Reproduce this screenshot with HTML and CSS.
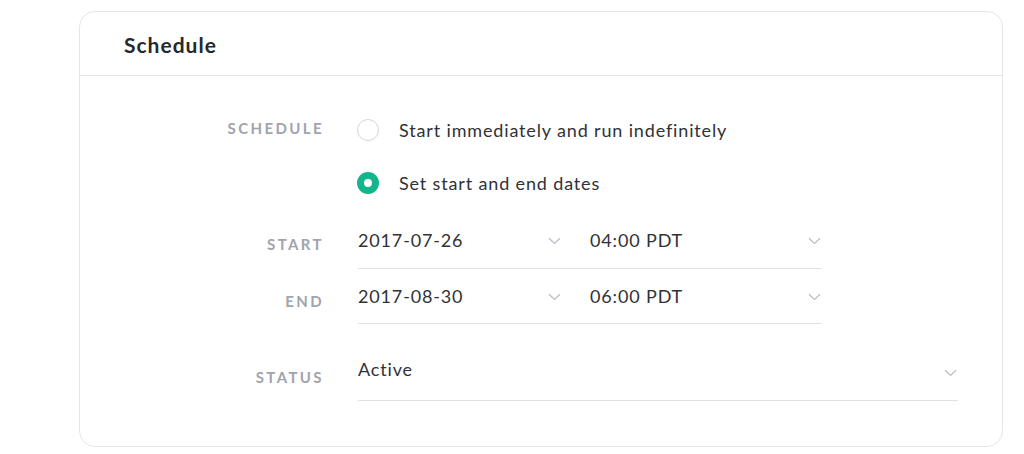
FILE: index.html
```html
<!DOCTYPE html>
<html>
<head>
<meta charset="utf-8">
<link rel="stylesheet" href="styles.css">
</head>
<body>
<div class="card">
  <div class="card-header"><h2 class="title">Schedule</h2></div>
  <div class="card-body">
    <div class="row row-schedule">
      <div class="label label-schedule">SCHEDULE</div>
      <div class="radios">
        <div class="radio-row"><span class="radio"></span><span class="radio-text">Start immediately and run indefinitely</span></div>
        <div class="radio-row"><span class="radio checked"></span><span class="radio-text">Set start and end dates</span></div>
      </div>
    </div>
    <div class="row row-start">
      <div class="label label-date">START</div>
      <div class="fields">
        <div class="field field-date"><span class="value">2017-07-26</span><svg class="chev" width="13" height="8" viewBox="0 0 13 8"><path d="M1 1.2 L6.5 6.5 L12 1.2" fill="none" stroke="#b8bcc6" stroke-width="1.2"/></svg></div>
        <div class="field field-time"><span class="value">04:00 PDT</span><svg class="chev" width="13" height="8" viewBox="0 0 13 8"><path d="M1 1.2 L6.5 6.5 L12 1.2" fill="none" stroke="#b8bcc6" stroke-width="1.2"/></svg></div>
      </div>
    </div>
    <div class="row row-end">
      <div class="label label-date">END</div>
      <div class="fields">
        <div class="field field-date"><span class="value">2017-08-30</span><svg class="chev" width="13" height="8" viewBox="0 0 13 8"><path d="M1 1.2 L6.5 6.5 L12 1.2" fill="none" stroke="#b8bcc6" stroke-width="1.2"/></svg></div>
        <div class="field field-time"><span class="value">06:00 PDT</span><svg class="chev" width="13" height="8" viewBox="0 0 13 8"><path d="M1 1.2 L6.5 6.5 L12 1.2" fill="none" stroke="#b8bcc6" stroke-width="1.2"/></svg></div>
      </div>
    </div>
    <div class="row row-status">
      <div class="label label-status">STATUS</div>
      <div class="field field-status"><span class="value">Active</span><svg class="chev" width="13" height="8" viewBox="0 0 13 8"><path d="M1 1.2 L6.5 6.5 L12 1.2" fill="none" stroke="#b8bcc6" stroke-width="1.2"/></svg></div>
    </div>
  </div>
</div>
</body>
</html>
```
FILE: styles.css
```css
* { box-sizing: border-box; }
html, body { margin: 0; padding: 0; background: #fff; }
body {
  font-family: "Lato", "Noto Sans", sans-serif;
  color: #2b2d31;
  padding: 11px 21px 0 79px;
}
.card {
  width: 924px;
  height: 436px;
  border: 1px solid #e4e5e8;
  border-radius: 16px;
  background: #fff;
}
.card-header {
  height: 64px;
  border-bottom: 1px solid #e4e5e8;
  padding-left: 44px;
  display: flex;
  align-items: center;
}
.title {
  margin: 0;
  font-size: 21px;
  font-weight: 700;
  letter-spacing: 1px;
  color: #26282c;
  padding-top: 2px;
}
.card-body {
  padding-top: 39px;
}
.row {
  display: grid;
  grid-template-columns: 242px 1fr;
  column-gap: 36px;
}
.label {
  text-align: right;
  font-size: 15px;
  font-weight: 700;
  letter-spacing: 2.4px;
  margin-right: -2px;
  color: #a0a4ad;
  line-height: 24px;
}
.label-schedule { padding-top: 1px; }
.label-date { padding-top: 20px; }
.label-status { padding-top: 25px; }
.radios { display: flex; flex-direction: column; gap: 23px; }
.radio-row {
  display: flex;
  align-items: center;
  height: 30px;
}
.radio {
  width: 22px;
  height: 22px;
  border-radius: 50%;
  border: 1.5px solid #d3d6dc;
  margin-right: 20px;
  margin-left: -1px;
  flex: none;
}
.radio.checked {
  border: 7px solid #13b58b;
  background: #fff;
}
.radio-text { font-size: 18px; letter-spacing: 0.85px; color: #303236; }
.row-start { margin-top: 14px; }
.fields { display: flex; }
.field {
  display: flex;
  align-items: center;
  justify-content: space-between;
  border-bottom: 1px solid #dfe1e6;
  line-height: 24px;
}
.value { font-size: 18px; letter-spacing: 0.85px; color: #303236; }
.row-start .field { padding: 16px 0 16px; }
.row-end .field { padding: 15px 0 15px; }
.field-date { width: 232px; padding-right: 29px !important; }
.field-time { width: 232px; padding-right: 1px !important; }
.row-status { margin-top: 17px; }
.field-status {
  width: 600px;
  padding: 16px 1px 19px 0;
}
.label-status { padding-top: 24px; }
.field-status .chev { margin-top: 8px; }
.chev { flex: none; margin-top: 2px; }
```
